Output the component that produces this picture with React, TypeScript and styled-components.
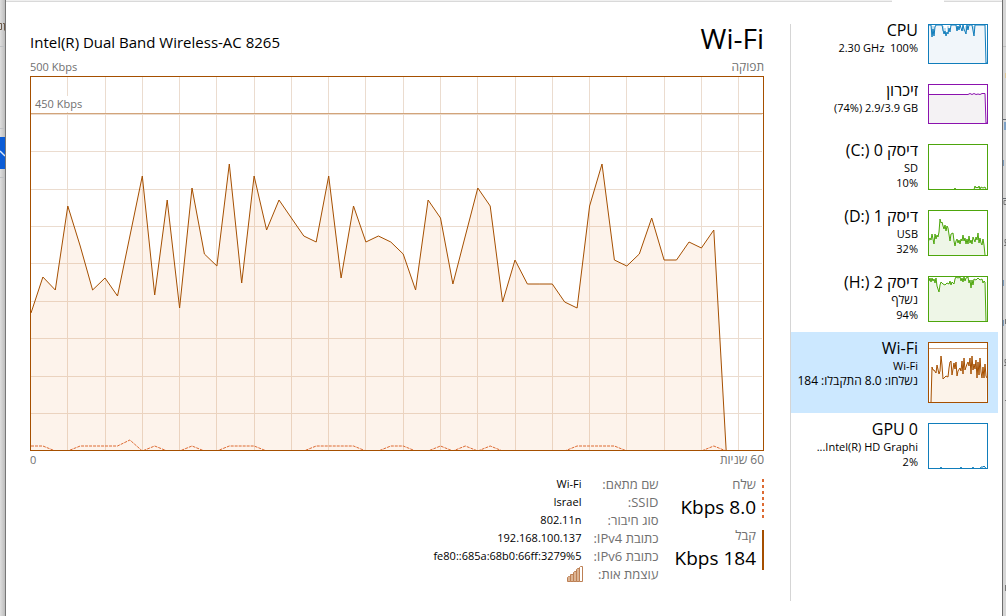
import React from "react";
import styled, { createGlobalStyle, css } from "styled-components";

const GlobalStyle = createGlobalStyle`
  * { box-sizing: border-box; }
  body {
    margin: 0;
    background: #fff;
    color: #000;
    font-family: "Open Sans", "Noto Sans", "DejaVu Sans", sans-serif;
    font-size: 12px;
  }
`;

const Desktop = styled.div`
  display: flex;
  min-height: 100vh;
`;

const Gutter = styled.svg<{ $side: "left" | "right" }>`
  flex: none;
  display: block;
  width: ${(p) => (p.$side === "left" ? 6 : 4)}px;
  height: 616px;
`;

const Window = styled.div`
  flex: 1;
  min-width: 0;
  display: flex;
  flex-direction: column;
`;

const TabStrip = styled.div`
  flex: none;
  display: flex;
  height: 2px;
`;

const TabEdge = styled.div<{ $width?: number; $open?: boolean }>`
  ${(p) => (p.$width ? css`flex: 0 0 ${p.$width}px;` : css`flex: 1;`)}
  background: ${(p) => (p.$open ? "#fff" : "#f0f0f0")};
  border-bottom: 1px solid ${(p) => (p.$open ? "#fff" : "#d9d9d9")};
`;

const Body = styled.div`
  flex: 1;
  display: flex;
  padding: 12px 4px 15px 24px;
`;

const Main = styled.main`
  flex: 1;
  min-width: 0;
  padding-top: 6px;
`;

const Divider = styled.div`
  flex: none;
  width: 1px;
  margin: 10px 0 0 26px;
  background: #d5d5d5;
`;

const Header = styled.header`
  display: flex;
  justify-content: space-between;
  align-items: flex-end;
  height: 38px;
`;

const Adapter = styled.h2`
  margin: 0;
  font-size: 15px;
  line-height: 32px;
  font-weight: 400;
`;

const Heading = styled.h1`
  margin: 0;
  font-size: 28px;
  line-height: 40px;
  font-weight: 400;
`;

const Caption = styled.div`
  display: flex;
  justify-content: space-between;
  align-items: center;
  height: 18px;
  font-size: 11px;
  line-height: 18px;
  color: #707070;
  [dir="rtl"] { font-size: 12px; }
`;

const ChartBox = styled.div`
  display: grid;
  height: 375px;
  border: 1px solid #a54f00;
  > * { grid-area: 1 / 1; }
`;

const Plot = styled.svg`
  display: block;
  width: 100%;
  height: 373px;
`;

const ScaleLabel = styled.span`
  justify-self: start;
  align-self: start;
  margin: 19px 0 0 4px;
  background: #fff;
  font-size: 11px;
  line-height: 16px;
  color: #707070;
`;

const Footer = styled.section`
  display: flex;
  align-items: flex-start;
  gap: 16px;
  padding-top: 6px;
`;

const Rates = styled.div`
  display: flex;
  flex-direction: column;
  gap: 11px;
  padding-top: 4px;
`;

const Rate = styled.div<{ $dashed?: boolean }>`
  height: 40px;
  padding-right: 6px;
  border-right: 2px solid #a54f00;
  ${(p) =>
    p.$dashed &&
    css`
      border-right-color: transparent;
      background: repeating-linear-gradient(#dd6b33 0 3px, transparent 3px 6px) right / 2px 100%
        no-repeat border-box;
    `}
`;

const RateName = styled.div`
  font-size: 13px;
  line-height: 10px;
  color: #707070;
`;

const RateValue = styled.div`
  direction: ltr;
  text-align: right;
  font-size: 19px;
  line-height: 36px;
`;

const Details = styled.dl`
  display: grid;
  grid-template-columns: max-content max-content;
  grid-auto-rows: 18px;
  column-gap: 12px;
  margin: 0;
  line-height: 18px;
  dt { color: #707070; font-size: 13px; }
  dd { margin: 0; font-size: 11px; }
`;

const Signal = styled.svg`
  display: block;
  width: 16px;
  height: 16px;
  margin: 1px -2px 0;
`;

const Sidebar = styled.nav`
  flex: none;
  width: 207px;
`;

const Item = styled.button<{ $active?: boolean }>`
  display: flex;
  gap: 10px;
  align-items: flex-start;
  width: 100%;
  padding: 7px 10px 10px 0;
  border: 0;
  background: ${(p) => (p.$active ? "#cce8ff" : "transparent")};
  color: inherit;
  font: inherit;
  text-align: right;
`;

const Thumb = styled.svg<{ $height: number }>`
  flex: none;
  display: block;
  width: 60px;
  height: ${(p) => p.$height}px;
  margin-top: 3px;
`;

const ItemText = styled.span`
  flex: 1;
  min-width: 0;
  display: flex;
  flex-direction: column;
`;

const ItemTitle = styled.span`
  margin-bottom: 1px;
  font-size: 16px;
  line-height: 18px;
`;

const ItemLine = styled.span<{ $hebrew?: boolean }>`
  font-size: ${(p) => (p.$hebrew ? 12 : 11)}px;
  line-height: 15px;
  white-space: pre;
`;

const RECEIVED = [
  236, 200, 213, 129, 169, 213, 201, 219, 159, 99, 218, 123, 231, 111, 177, 189, 87, 206, 99, 153,
  123, 141, 159, 165, 99, 201, 129, 165, 159, 165, 177, 213, 123, 141, 207, 159, 111, 129, 225, 183,
  207, 207, 207, 225, 231, 129, 87, 183, 189, 177, 141, 183, 183, 165, 171, 153, 374,
];
const SENT = [
  369, 369, 374, 374, 369, 369, 369, 369, 363, 374, 369, 374, 374, 369, 374, 374, 369, 369, 369, 374,
  374, 374, 374, 369, 369, 369, 369, 374, 374, 369, 369, 374, 374, 369, 374, 369, 374, 369, 374, 374,
  374, 374, 374, 374, 369, 369, 369, 369, 374, 374, 374, 374, 374, 374, 374, 369, 374,
];
const STEP = 733 / 59;
const trace = (values: number[]) =>
  values.map((v, i) => `${(i * STEP - (i ? 0.5 : 0)).toFixed(1)},${v}`).join(" ");

function ThroughputChart() {
  return (
    <ChartBox>
      <Plot viewBox="0 0 732 373" preserveAspectRatio="none" role="img" aria-label="תפוקה">
        {Array.from({ length: 19 }, (_, i) => (
          <rect key={i} x={Math.round((i + 1) * STEP * 3) - 1} y={0} width={1} height={373} fill="#ebdccf" />
        ))}
        {Array.from({ length: 9 }, (_, i) => (
          <rect key={i} x={0} y={Math.ceil((i + 1) * 37.4) - 1} width={731} height={1} fill="#ebdccf" />
        ))}
        <rect x={0} y={36} width={732} height={1} fill="#d2a47a" />
        <polygon points={`0,373 ${trace(RECEIVED)}`} fill="#e88a3c" fillOpacity={0.1} />
        <polyline points={trace(RECEIVED)} fill="none" stroke="#a54f00" strokeWidth={1} />
        <polyline points={trace(SENT)} fill="none" stroke="#dd6b33" strokeWidth={1} strokeDasharray="3 1" />
      </Plot>
      <ScaleLabel>450 Kbps</ScaleLabel>
    </ChartBox>
  );
}

type Resource = {
  id: string;
  title: React.ReactNode;
  lines: { text: string; dir?: "ltr" | "rtl"; hebrew?: boolean }[];
  color: string;
  fill: string;
  height: number;
  points: string;
  extra?: React.ReactNode;
  active?: boolean;
};

const RESOURCES: Resource[] = [
  {
    id: "cpu",
    title: "CPU",
    lines: [{ text: "2.30 GHz  100%", dir: "ltr" }],
    color: "#117dbb",
    fill: "#f1f6fa",
    height: 40,
    points:
      "0,1 3,1 4,13 5,5 6,12 7,3 8,1 14,1 15,6 16,10 17,7 18,12 19,8 20,10 21,4 22,8 23,1 28,1 29,7 30,2 31,6 32,1 34,7 35,1 36,5 38,10 39,1 40,6 41,1 44,1 46,12 47,1 57,1 58,39 59,39",
    extra: <path d="M4 2v9M6 2v8M15 2v5M17 4v6M20 2v6M29 2v4M35 2v5M38 2v6M40 2v3M46 2v7" stroke="#117dbb" strokeOpacity={0.5} />,
  },
  {
    id: "memory",
    title: "זיכרון",
    lines: [{ text: "(74%) 2.9/3.9 GB", dir: "ltr" }],
    color: "#8b12ae",
    fill: "#f4f2f4",
    height: 40,
    points: "0,10.5 40,10.5 42,9.5 44,10.5 46,9.5 48,10.5 50,10 52,10.5 54,9.5 57,9.5 58,39 59,39",
  },
  {
    id: "disk0",
    title: <>דיסק 0 <bdi dir="ltr">(C:)</bdi></>,
    lines: [{ text: "SD" }, { text: "10%", dir: "ltr" }],
    color: "#4da60c",
    fill: "#eef6e7",
    height: 46,
    points: "0,43 1,45.5 26,45.5 27,44 28,45.5 46,45.5 47,42 48,44 49,43 50,44 51,42 52,45 53,43 55,44 57,43 58,45",
  },
  {
    id: "disk1",
    title: <>דיסק 1 <bdi dir="ltr">(D:)</bdi></>,
    lines: [{ text: "USB" }, { text: "32%", dir: "ltr" }],
    color: "#4da60c",
    fill: "#eef6e7",
    height: 46,
    points:
      "0,32 2,28 3,30 4,24 5,29 6,34 7,24 8,29 9,25 10,27 11,22 12,9 13,13 14,12 15,16 16,19 17,15 18,21 19,16 20,18 22,31 23,24 25,23 26,31 27,36 28,31 29,29 30,33 31,30 32,34 33,29 34,31 35,25 36,31 37,28 38,34 39,29 40,34 41,26 42,33 43,30 44,34 45,27 47,32 48,27 49,30 50,23 51,33 52,28 53,33 54,35 55,29 56,35 57,45",
  },
  {
    id: "disk2",
    title: <>דיסק 2 <bdi dir="ltr">(H:)</bdi></>,
    lines: [{ text: "נשלף", hebrew: true }, { text: "94%", dir: "ltr" }],
    color: "#4da60c",
    fill: "#eef6e7",
    height: 46,
    points:
      "0,3 1,5 2,2 3,6 4,2 5,5 6,3 7,7 8,2 9,10 10,13 11,16 12,9 13,6 15,8 17,9 19,7 21,8 22,5 23,9 24,6 26,8 27,3 28,1 30,2 32,1 33,5 34,2 35,6 36,1 37,5 38,2 40,1 41,7 42,4 43,12 44,4 45,9 46,3 48,4 50,2 52,4 54,3 55,7 56,5 57,6 58,45",
  },
  {
    id: "wifi",
    title: "Wi-Fi",
    lines: [{ text: "Wi-Fi" }, { text: "נשלחו: 8.0 התקבלו: 184", hebrew: true }],
    color: "#a54f00",
    fill: "#fcf3ea",
    height: 61,
    active: true,
    points:
      "3,60 4,25 5,28 6,28 8,31 9,23 11,32 12,29 13,14 14,23 15,37 16,36 18,34 20,35 21,26 22,20 23,19 24,33 26,21 27,27 28,20 29,34 30,29 32,26 33,29 34,19 35,32 36,16 37,28 39,22 40,20 41,24 42,16 43,32 44,14 45,28 46,22 47,27 48,18 49,36 50,20 51,33 52,16 53,30 54,36 55,25 56,36 57,22 58,34 59,36",
    extra: <path d="M1 6.5h58" stroke="#cfa078" />,
  },
  {
    id: "gpu",
    title: "GPU 0",
    lines: [{ text: "Intel(R) HD Graphi..." }, { text: "2%", dir: "ltr" }],
    color: "#117dbb",
    fill: "#f1f6fa",
    height: 46,
    points: "0,45.5 12,45.5 13,44 14,45.5 32,45.5 33,44 34,45.5 44,45.5 45,44 46,45.5 52,45.5 53,44 55,44 56,43 57,44 58,45.5",
  },
];

function ResourceItem({ item }: { item: Resource }) {
  const h = item.height;
  return (
    <Item type="button" $active={item.active} aria-pressed={!!item.active}>
      <ItemText>
        <ItemTitle dir="rtl">{item.title}</ItemTitle>
        {item.lines.map((line) => (
          <ItemLine key={line.text} dir={line.dir ?? "rtl"} $hebrew={line.hebrew}>
            {line.text}
          </ItemLine>
        ))}
      </ItemText>
      <Thumb $height={h} viewBox={`0 0 60 ${h}`} aria-hidden="true">
        <rect width={60} height={h} fill="#fff" />
        <polygon points={`${item.points.split(",")[0]},${h - 1} ${item.points} 58,${h - 1}`} fill={item.fill} />
        {item.extra}
        <polyline points={item.points} fill="none" stroke={item.color} strokeWidth={1} />
        <rect x={0.5} y={0.5} width={59} height={h - 1} fill="none" stroke={item.color} />
      </Thumb>
    </Item>
  );
}

const DETAILS: [string, React.ReactNode][] = [
  ["שם מתאם:", "Wi-Fi"],
  ["SSID:", "Israel"],
  ["סוג חיבור:", "802.11n"],
  ["כתובת IPv4:", "192.168.100.137"],
  ["כתובת IPv6:", <bdi dir="ltr">fe80::685a:68b0:66ff:3279%5</bdi>],
];

function SignalBars() {
  return (
    <Signal viewBox="0 0 16 16" role="img" aria-label="4/5">
      <g fill="#dcb493" stroke="#bd8055">
        <path d="M.5 15.5v-4l1-1h1l1 1v4z" />
        <path d="M3.5 15.5v-7h3v7z" />
        <path d="M6.5 15.5v-9l1-1h2v10z" />
        <path d="M9.5 15.5v-12l1-1h2v13z" />
        <path d="M12.5 15.5v-14l1-1h2v15z" fill="#fff" />
      </g>
    </Signal>
  );
}

export default function App() {
  return (
    <>
      <GlobalStyle />
      <Desktop>
        <Gutter $side="left" viewBox="0 0 6 616" aria-hidden="true">
          <defs>
            <linearGradient id="shade">
              <stop offset="0" stopColor="#dedede" />
              <stop offset="1" stopColor="#bdbdbd" />
            </linearGradient>
          </defs>
          <rect width={5} height={616} fill="url(#shade)" />
          <path d="M0 46.5h5M0 128.5h5M0 177.5h5" stroke="#bfc1c4" />
          <path d="M0 23.5h1.5v6H0M3 23.5h1.5v7" fill="none" stroke="#6b5a4a" />
          <rect y={137} width={5} height={32} fill="#0b5cd6" />
          <path d="M0 151l5 5" stroke="#dce8fa" strokeWidth={1.5} />
          <rect x={5} width={1} height={616} fill="#777" />
        </Gutter>
        <Window>
          <TabStrip>
            <TabEdge />
            <TabEdge $width={52} $open />
            <TabEdge $width={58} />
          </TabStrip>
          <Body>
            <Main>
              <Header>
                <Adapter>Intel(R) Dual Band Wireless-AC 8265</Adapter>
                <Heading>Wi-Fi</Heading>
              </Header>
              <Caption>
                <span>500 Kbps</span>
                <span dir="rtl">תפוקה</span>
              </Caption>
              <ThroughputChart />
              <Caption>
                <span>0</span>
                <span dir="rtl">60 שניות</span>
              </Caption>
              <Footer dir="rtl">
                <Rates>
                  <Rate $dashed>
                    <RateName>שלח</RateName>
                    <RateValue>Kbps 8.0</RateValue>
                  </Rate>
                  <Rate>
                    <RateName>קבל</RateName>
                    <RateValue>Kbps 184</RateValue>
                  </Rate>
                </Rates>
                <Details>
                  {DETAILS.map(([name, value]) => (
                    <React.Fragment key={name}>
                      <dt>{name}</dt>
                      <dd>{value}</dd>
                    </React.Fragment>
                  ))}
                  <dt>עוצמת אות:</dt>
                  <dd>
                    <SignalBars />
                  </dd>
                </Details>
              </Footer>
            </Main>
            <Divider />
            <Sidebar>
              {RESOURCES.map((item) => (
                <ResourceItem key={item.id} item={item} />
              ))}
            </Sidebar>
          </Body>
        </Window>
        <Gutter $side="right" viewBox="0 0 4 616" aria-hidden="true">
          <rect x={1} width={3} height={616} fill="#d6d6d6" />
          <rect width={1} height={616} fill="#6e6e6e" />
          <path d="M1 46.5h3" stroke="#bdbdbd" />
          <rect x={3} y={73} width={1} height={5} fill="#e0c898" />
          <path d="M1 119.5h3M1 198.5h3" stroke="#666a70" />
          <rect x={2} y={122} width={2} height={8} fill="#7fa3c8" />
          <path d="M1 160h1v6H1zM1 280h1v6H1zM1 320h1v6H1z" fill="#7c9cbc" />
          <path d="M4 200.5h-2v4h2M4 239.5h-1v3h1v3h-2M4 359.5h-1v3h1v3h-2M3.5 319v5M3 400.5h1M3.5 585v6" fill="none" stroke="#777" />
        </Gutter>
      </Desktop>
    </>
  );
}
